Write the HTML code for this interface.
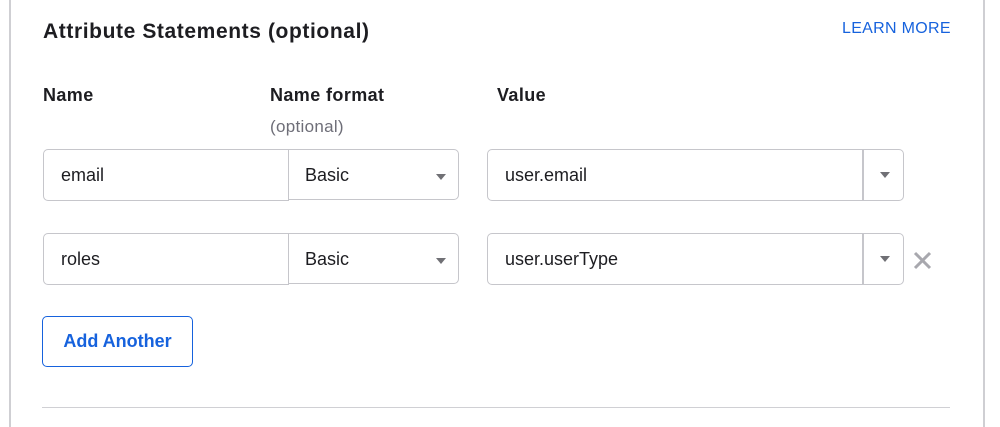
<!DOCTYPE html>
<html><head><style>
body{margin:0;width:1000px;height:427px;background:#fff;font-family:"Liberation Sans",sans-serif;position:relative;overflow:hidden;color:#1d1d21}
.a{position:absolute}
.box{position:absolute;box-sizing:border-box;border:1px solid #c6c6cb;border-radius:5px;background:#fff;font-size:18px;line-height:1;display:flex;align-items:center;padding-left:17px}
.tri{position:absolute;width:0;height:0;border-left:5px solid transparent;border-right:5px solid transparent;border-top:6px solid #707075}
.lbl{position:absolute;font-weight:bold;font-size:18px;letter-spacing:0.4px}
</style></head><body>
<div class="a" style="left:9px;top:0;width:2px;height:427px;background:#cfcfd3"></div>
<div class="a" style="left:983px;top:0;width:2px;height:427px;background:#cfcfd3"></div>
<div class="a" style="left:43px;top:20px;font-size:21px;font-weight:bold;letter-spacing:0.6px">Attribute Statements (optional)</div>
<div class="a" style="left:842px;top:20px;font-size:16px;color:#1662dd;letter-spacing:0.3px">LEARN MORE</div>
<div class="lbl" style="left:43px;top:85px">Name</div>
<div class="lbl" style="left:270px;top:85px">Name format</div>
<div class="a" style="left:270px;top:117px;font-size:17px;color:#6e6e78;letter-spacing:0.3px">(optional)</div>
<div class="lbl" style="left:497px;top:85px">Value</div>

<div class="box" style="left:43px;top:149px;width:246px;height:52px;border-radius:5px 0 0 5px">email</div>
<div class="box" style="left:288px;top:149px;width:171px;height:51px;border-radius:0 5px 5px 0;padding-left:16px">Basic</div>
<div class="tri" style="left:436px;top:174px"></div>
<div class="box" style="left:487px;top:149px;width:417px;height:52px">user.email</div>
<div class="a" style="left:862px;top:150px;width:2px;height:50px;background:#c6c6cb"></div>
<div class="tri" style="left:880px;top:172px"></div>

<div class="box" style="left:43px;top:233px;width:246px;height:52px;border-radius:5px 0 0 5px">roles</div>
<div class="box" style="left:288px;top:233px;width:171px;height:51px;border-radius:0 5px 5px 0;padding-left:16px">Basic</div>
<div class="tri" style="left:436px;top:258px"></div>
<div class="box" style="left:487px;top:233px;width:417px;height:52px">user.userType</div>
<div class="a" style="left:862px;top:234px;width:2px;height:50px;background:#c6c6cb"></div>
<div class="tri" style="left:880px;top:256px"></div>
<svg class="a" style="left:913px;top:251px" width="19" height="19" viewBox="0 0 19 19"><path d="M2 2L17 17M17 2L2 17" stroke="#a8a8ae" stroke-width="3"/></svg>

<div class="a" style="left:42px;top:316px;width:151px;height:51px;box-sizing:border-box;border:1px solid #1662dd;border-radius:5px;color:#1662dd;font-weight:bold;font-size:18px;display:flex;align-items:center;justify-content:center">Add Another</div>
<div class="a" style="left:42px;top:407px;width:908px;height:1px;background:#d0d0d4"></div>
</body></html>
